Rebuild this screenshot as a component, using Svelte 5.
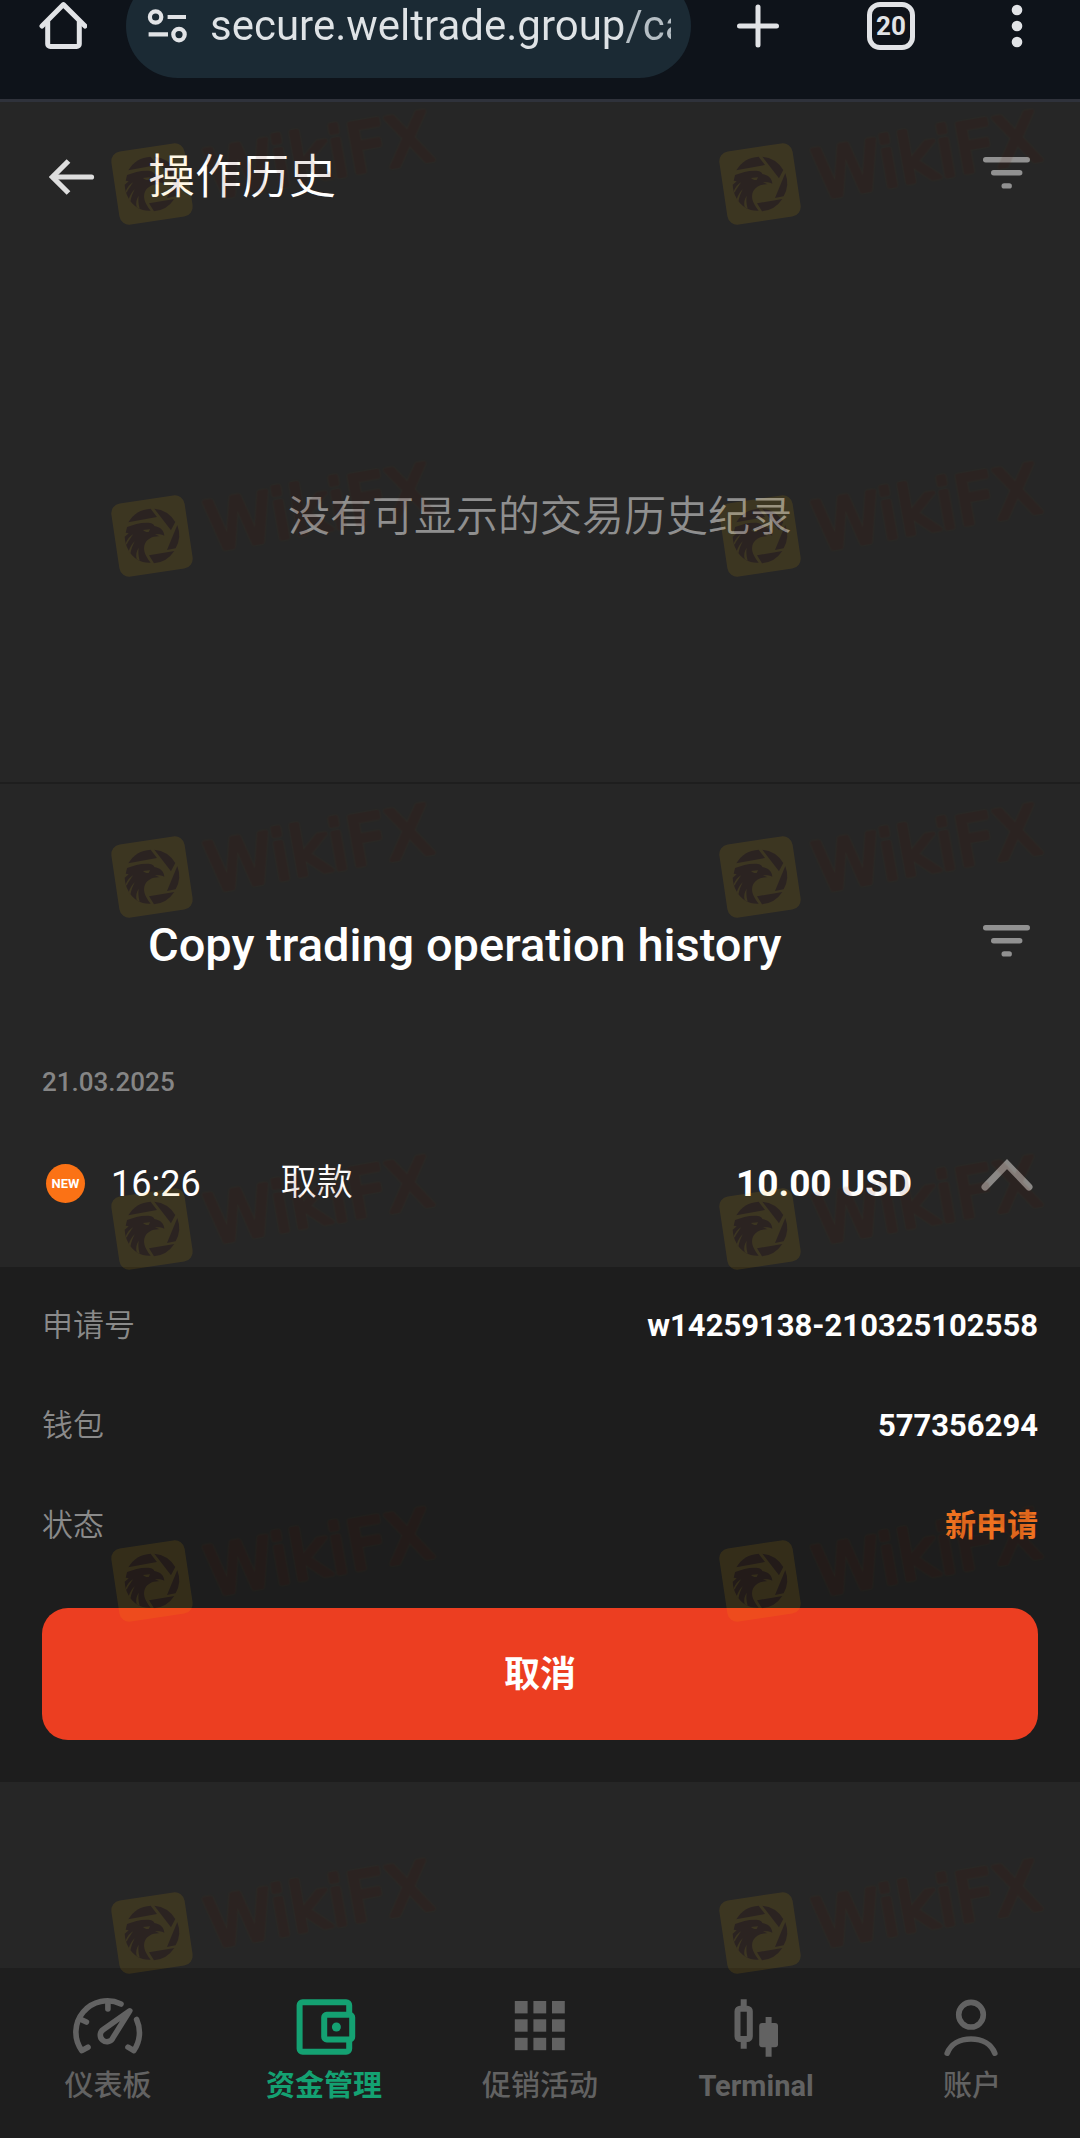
<script>
  let open = $state(true)
  let address = $state('secure.weltrade.group/cabinet')

  const details = [
    { label: '申请号', value: 'w14259138-210325102558' },
    { label: '钱包', value: '577356294' },
    { label: '状态', value: '新申请', status: true },
  ]

  const tabs = [
    { icon: 'gauge', label: '仪表板' },
    { icon: 'wallet', label: '资金管理', active: true },
    { icon: 'grid', label: '促销活动' },
    { icon: 'candles', label: 'Terminal', latin: true },
    { icon: 'user', label: '账户' },
  ]

  const markColumns = [152, 760]
  const markRows = [184, 536, 877, 1229, 1581, 1933]
</script>

{#snippet filterIcon()}
  <svg width="48" height="32" viewBox="0 0 48 32" fill="currentColor" aria-hidden="true">
    <rect x="0" y="0" width="47" height="5.4" rx="2.7" />
    <rect x="8" y="13" width="31.4" height="5.4" rx="2.7" />
    <rect x="18.5" y="26.2" width="10.4" height="5.4" rx="2.7" />
  </svg>
{/snippet}

<div class="page">
  <header class="browser">
    <div class="toolbar">
      <button class="tool" aria-label="Home">
        <svg width="48" height="52" viewBox="0 0 48 52" fill="none" stroke="currentColor" stroke-width="5" stroke-linecap="round" stroke-linejoin="round" aria-hidden="true">
          <path d="M3 26 24.4 4.6 46 26" />
          <path d="M8.7 22v22a2.6 2.6 0 0 0 2.6 2.6h26.4a2.6 2.6 0 0 0 2.6-2.6V22" />
        </svg>
      </button>
      <label class="omnibox">
        <svg width="42" height="36" viewBox="0 0 42 36" fill="none" stroke="currentColor" stroke-width="4.2" aria-hidden="true">
          <circle cx="9.6" cy="9" r="5.7" />
          <path d="M21.6 9H40M2.6 26.4H22" />
          <circle cx="33" cy="26.6" r="5.7" />
        </svg>
        <input type="text" aria-label="Address" bind:value={address} />
      </label>
      <button class="tool plus" aria-label="New tab">
        <svg width="42" height="44" viewBox="0 0 42 44" stroke="currentColor" stroke-width="5" stroke-linecap="round" aria-hidden="true">
          <path d="M21 3v38M2.5 22h37" />
        </svg>
      </button>
      <button class="tool tab-count" aria-label="Open tabs">20</button>
      <button class="tool" aria-label="Menu">
        <svg width="28" height="44" viewBox="0 0 28 44" fill="currentColor" aria-hidden="true">
          <circle cx="14" cy="6" r="5.3" />
          <circle cx="14" cy="22" r="5.3" />
          <circle cx="14" cy="38" r="5.3" />
        </svg>
      </button>
    </div>
  </header>

  <main>
    <section class="history">
      <div class="head">
        <button class="back" aria-label="Back">
          <svg width="46" height="36" viewBox="0 0 46 36" fill="none" stroke="currentColor" stroke-width="5.2" aria-hidden="true">
            <path d="M42.5 18H4.5" stroke-linecap="round" />
            <path d="M19.5 2 3.5 18l16 16" />
          </svg>
        </button>
        <h1>操作历史</h1>
        <button class="filter" aria-label="Filter">{@render filterIcon()}</button>
      </div>
      <p class="empty">没有可显示的交易历史纪录</p>
    </section>

    <section class="copy">
      <div class="head">
        <h2>Copy trading operation history</h2>
        <button class="filter" aria-label="Filter copy trading">{@render filterIcon()}</button>
      </div>
      <p class="date">21.03.2025</p>
      <button class="operation" aria-expanded={open} onclick={() => (open = !open)}>
        <span class="badge">NEW</span>
        <span class="time">16:26</span>
        <span class="kind">取款</span>
        <span class="amount">10.00 USD</span>
        <svg class:closed={!open} width="54" height="34" viewBox="0 0 54 34" fill="none" stroke="currentColor" stroke-width="7" stroke-linecap="round" aria-hidden="true">
          <path d="M5 29 27 6l22 23" />
        </svg>
      </button>
      {#if open}
        <div class="details">
          <dl>
            {#each details as row (row.label)}
              <div class="row">
                <dt>{row.label}</dt>
                <dd class:status={row.status}>{row.value}</dd>
              </div>
            {/each}
          </dl>
          <button class="cancel">取消</button>
        </div>
      {/if}
    </section>
  </main>

  <nav>
    {#each tabs as tab (tab.icon)}
      <a href="#{tab.icon}" class:active={tab.active} class:latin={tab.latin}>
        <svg width="72" height="62" viewBox="0 0 72 62" fill="none" stroke="currentColor" stroke-width="6" stroke-linejoin="round" aria-hidden="true">
          {#if tab.icon === 'gauge'}
            <g stroke-width="5.6" stroke-linecap="round">
              <path d="M16 51.2 9.8 54.6A31.4 31.4 0 0 1 49 8" />
              <path d="M64.6 23.5a31.4 31.4 0 0 1-2.8 31.1L56 51.2" />
              <path d="M35.9 6v7M8 23l6.4 3" />
              <path d="M57.8 14.8 31.2 33.6a6.6 6.6 0 1 0 9.7 8.2Z" />
            </g>
          {:else if tab.icon === 'wallet'}
            <path d="M61.2 18V9.3a3 3 0 0 0-3-3H14.6a3 3 0 0 0-3 3v43.4a3 3 0 0 0 3 3h43.6a3 3 0 0 0 3-3V44" />
            <rect x="36.2" y="18.8" width="28" height="24.6" rx="2.5" />
            <circle cx="48.4" cy="31" r="4.5" fill="currentColor" stroke="none" />
          {:else if tab.icon === 'grid'}
            <g fill="currentColor" stroke="none">
              {#each [5, 23.3, 41.8] as y}
                {#each [10.8, 29.4, 48] as x}
                  <rect {x} {y} width="12.8" height="12.4" />
                {/each}
              {/each}
            </g>
          {:else if tab.icon === 'candles'}
            <rect x="17.5" y="12.7" width="12.3" height="30.3" rx="2.5" />
            <path d="M23.7 3.3v8M23.7 45v7.8" />
            <rect x="39.2" y="27" width="18.8" height="24.3" rx="3" fill="currentColor" stroke="none" />
            <path d="M48.6 21v8M48.6 49v11.7" />
          {:else}
            <g stroke-width="5.6" stroke-linecap="round">
              <circle cx="35" cy="18.7" r="12.3" />
              <path d="M11.2 57.2C14.8 48 24 43 35 43s20.2 5 23.8 14.2" />
            </g>
          {/if}
        </svg>
        <span>{tab.label}</span>
      </a>
    {/each}
  </nav>

  <svg class="watermark" aria-hidden="true">
    <defs>
      <g id="wiki-mark">
        <rect x="-37" y="-37" width="74" height="74" rx="10" transform="rotate(-8.5)" fill="#ffbe00" />
        <!-- aperture blades and the eagle head, drawn on a 3x grid -->
        <g transform="scale(0.333) translate(-157 -220)" fill="#581000">
          <path d="M86 179a82 82 0 0 1 67-41l19 25Z" />
          <path d="M164 138a82 82 0 0 1 63 40l-13 25Z" />
          <path d="M233 187a82 82 0 0 1-5 70l-26 5Z" />
          <path d="M224 265a82 82 0 0 1-61 37l-15-24Z" />
          <path d="M82 193c18-7 38-13 58-13 18 0 22 4 24 10 18 3 29 13 30 29-10-5-20-5-28-4l14 6c-22-1-36 8-43 20-8 16-4 34 16 59-15 1-28-2-40-9-22-14-37-40-38-69l12-10-9-2Z" />
          <path d="M130 202l21-2-4 8c-7 1-11-1-17-6ZM78 242c5-12 12-21 22-27-6 10-11 16-19 31ZM87 266c5-14 10-22 18-30-7 14-10 22-13 37ZM111 290c-3-14-1-24 6-35-2 14-1 24 3 39Z" fill="#ffbe00" />
        </g>
        <text x="55" y="25" transform="rotate(-10)">WikiFX</text>
      </g>
    </defs>
    {#each markRows as y}
      {#each markColumns as x}
        <use href="#wiki-mark" transform="translate({x} {y})" />
      {/each}
    {/each}
  </svg>
</div>

<style>
  :global(body) {
    background: #262626;
  }
  .page {
    position: relative;
    display: flex;
    flex-direction: column;
    min-height: 100vh;
    overflow: hidden;
    background: #262626;
    color: #fff;
    font-family: Roboto, "Noto Sans CJK SC", sans-serif;
  }
  button {
    padding: 0;
    border: 0;
    background: none;
    color: inherit;
    font: inherit;
    cursor: pointer;
  }
  svg {
    display: block;
    flex: none;
  }
  h1, h2, p, dl, dd {
    margin: 0;
  }

  .browser {
    overflow: hidden;
    background: #0e131a;
    border-bottom: 3px solid #2f323b;
  }
  .toolbar {
    display: flex;
    align-items: center;
    margin-top: -26px;
    padding: 0 49px 21px 39px;
    color: #e1e3e6;
  }
  .omnibox {
    display: flex;
    flex: 1;
    align-items: center;
    gap: 22px;
    min-width: 0;
    height: 104px;
    margin: 0 46px 0 39px;
    padding: 0 20px;
    box-sizing: border-box;
    border-radius: 52px;
    background: #1b2a34;
  }
  .omnibox input {
    flex: 1;
    min-width: 0;
    padding: 0;
    border: 0;
    outline: 0;
    background: linear-gradient(90deg, #dfe3e6 412px, #b5bec4 414px);
    -webkit-background-clip: text;
    background-clip: text;
    color: transparent;
    font: 42px/54px Roboto, sans-serif;
  }
  .tab-count {
    width: 48px;
    height: 48px;
    margin: 0 88px;
    box-sizing: border-box;
    border: 5px solid;
    border-radius: 13px;
    font-size: 26px;
    font-weight: 700;
    line-height: 38px;
  }

  .history {
    border-bottom: 2px solid #1e1e1e;
  }
  .head {
    display: flex;
    align-items: center;
    height: 150px;
    padding: 0 49px;
  }
  .back {
    margin-right: 53px;
    color: #dedede;
  }
  h1, h2 {
    flex: 1;
    font-size: 47px;
    line-height: 60px;
  }
  h1 {
    font-weight: 350;
  }
  h2 {
    font-weight: 500;
  }
  .filter {
    margin-bottom: 8px;
    color: #919191;
  }
  .empty {
    padding: 234px 0;
    color: #8f8f8f;
    font-size: 42px;
    font-weight: 350;
    line-height: 62px;
    text-align: center;
  }

  .copy .head {
    padding: 86px 49px 0 148px;
  }
  .date {
    padding: 44px 42px 0;
    color: #858585;
    font-size: 26px;
    font-weight: 500;
    line-height: 36px;
  }
  .operation {
    display: flex;
    align-items: center;
    width: 100%;
    height: 167px;
    padding: 0 46px;
    font-size: 36px;
    line-height: 42px;
    text-align: left;
  }
  .badge {
    width: 39px;
    height: 39px;
    border-radius: 50%;
    background: #fb7215;
    font-size: 13px;
    font-weight: 700;
    line-height: 39px;
    text-align: center;
  }
  .time {
    margin-left: 26px;
  }
  .kind {
    flex: 1;
    margin-left: 80px;
    padding-bottom: 2px;
    font-weight: 350;
  }
  .amount {
    margin-right: 68px;
    font-size: 37px;
    font-weight: 700;
  }
  .operation svg {
    margin-bottom: 18px;
    color: #8a8886;
  }
  .operation svg.closed {
    transform: scaleY(-1);
  }

  .details {
    padding: 41px 42px 42px;
    background: #1d1d1d;
  }
  dl {
    display: grid;
    gap: 64px;
    margin-bottom: 64px;
  }
  .row {
    display: flex;
    justify-content: space-between;
    font-size: 31px;
    line-height: 36px;
  }
  dt {
    color: #8a8a8a;
    font-weight: 350;
  }
  dd {
    font-weight: 700;
  }
  .status {
    color: #ef7120;
  }
  .cancel {
    width: 100%;
    height: 132px;
    padding-bottom: 6px;
    border-radius: 26px;
    background: #ec3e21;
    font-size: 36px;
    font-weight: 700;
  }

  nav {
    display: grid;
    grid-template-columns: repeat(5, 1fr);
    height: 170px;
    margin-top: auto;
    background: #1e1e1e;
  }
  nav a {
    display: flex;
    flex-direction: column;
    align-items: center;
    gap: 10px;
    padding-top: 28px;
    color: #626262;
    font-size: 29px;
    font-weight: 500;
    line-height: 36px;
    text-decoration: none;
  }
  nav a.active {
    color: #14a172;
    font-weight: 700;
  }
  nav a.latin {
    font-weight: 700;
  }

  .watermark {
    position: absolute;
    inset: 0;
    width: 100%;
    height: 100%;
    pointer-events: none;
  }
  .watermark use {
    opacity: 0.1;
  }
  .watermark text {
    fill: #581000;
    stroke: #581000;
    stroke-width: 4px;
    stroke-linejoin: round;
    font: 68px "DejaVu Sans", sans-serif;
    filter: drop-shadow(0 0 1px #8a6a10);
  }
</style>
